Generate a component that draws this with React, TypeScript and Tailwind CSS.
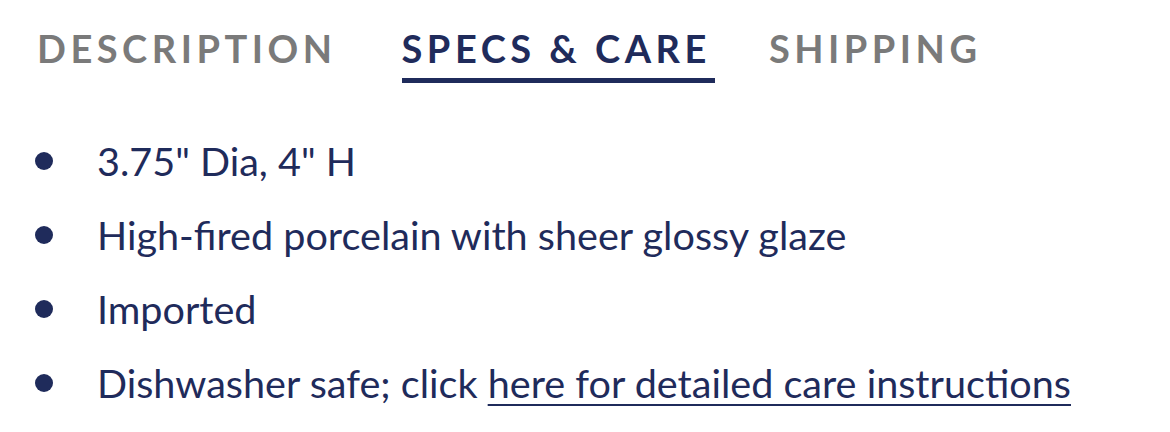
const specs = [
  '3.75" Dia, 4" H',
  'High-fired porcelain with sheer glossy glaze',
  'Imported',
];

export default function App() {
  return (
    <div className="w-[1170px] h-[432px] bg-white font-['Lato',sans-serif] overflow-hidden">
      {/* Tabs */}
      <div className="flex items-start gap-[54px] pl-[37px] pt-[26px]">
        <button className="mr-[11px] text-[38px] leading-[44px] font-bold tracking-[4.5px] text-[#7a7a7a]">
          DESCRIPTION
        </button>
        <button className="flex flex-col text-[38px] leading-[44px] font-bold tracking-[4.5px] text-[#1f2b5b]">
          <span className="pr-[4px]">SPECS &amp; CARE</span>
          <span className="mt-[8px] h-[5px] w-full bg-[#1f2b5b]"></span>
        </button>
        <button className="text-[38px] leading-[44px] font-bold tracking-[4.5px] text-[#7a7a7a]">
          SHIPPING
        </button>
      </div>

      {/* Spec list */}
      <ul className="mt-[51px] pl-[35px] flex flex-col gap-[20px] text-[39.6px] leading-[54px] text-[#1f2b5b]">
        {specs.map((s) => (
          <li key={s} className="flex items-center gap-[44px]">
            <span className="w-[18px] h-[18px] rounded-full bg-[#1f2b5b] shrink-0"></span>
            <span>{s}</span>
          </li>
        ))}
        <li className="flex items-center gap-[44px]">
          <span className="w-[18px] h-[18px] rounded-full bg-[#1f2b5b] shrink-0"></span>
          <span>
            Dishwasher safe; click{' '}
            <a href="#" className="underline underline-offset-[6px] decoration-2">
              here for detailed care instructions
            </a>
          </span>
        </li>
      </ul>
    </div>
  );
}
